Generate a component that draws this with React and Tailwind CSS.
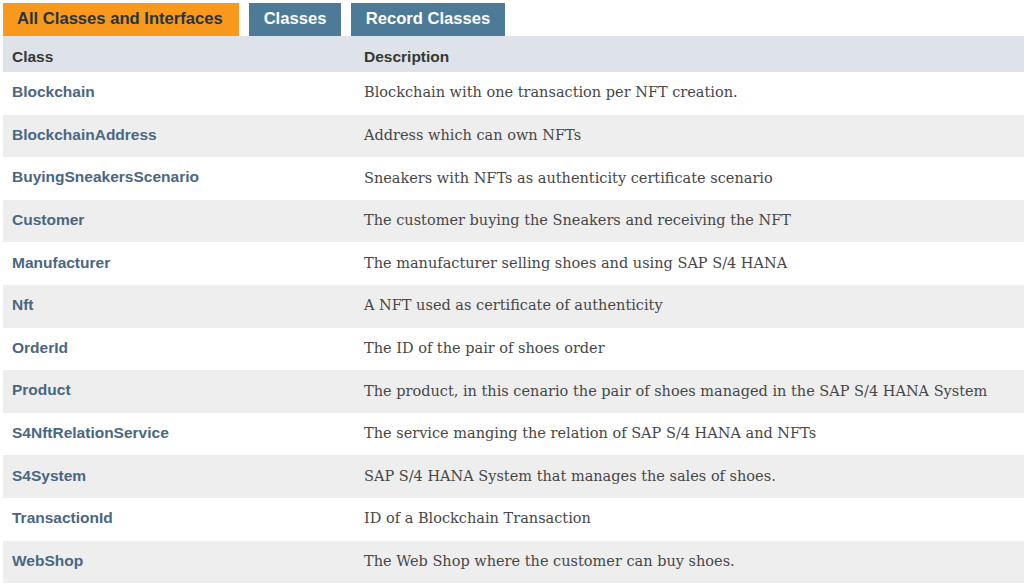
import React from 'react';

const rows = [
  ['Blockchain', 'Blockchain with one transaction per NFT creation.'],
  ['BlockchainAddress', 'Address which can own NFTs'],
  ['BuyingSneakersScenario', 'Sneakers with NFTs as authenticity certificate scenario'],
  ['Customer', 'The customer buying the Sneakers and receiving the NFT'],
  ['Manufacturer', 'The manufacturer selling shoes and using SAP S/4 HANA'],
  ['Nft', 'A NFT used as certificate of authenticity'],
  ['OrderId', 'The ID of the pair of shoes order'],
  ['Product', 'The product, in this cenario the pair of shoes managed in the SAP S/4 HANA System'],
  ['S4NftRelationService', 'The service manging the relation of SAP S/4 HANA and NFTs'],
  ['S4System', 'SAP S/4 HANA System that manages the sales of shoes.'],
  ['TransactionId', 'ID of a Blockchain Transaction'],
  ['WebShop', 'The Web Shop where the customer can buy shoes.'],
];

const sans = "font-['Liberation_Sans',Arial,sans-serif]";

const App = () => {
  return (
    <div className={`w-[1024px] h-[584px] overflow-hidden bg-white pt-[3px] pl-[3px] ${sans}`}>
      <div className="flex items-end gap-[10px] h-[33px]">
        <div className="h-[33px] bg-[#f8981d] pl-[14px] flex items-center text-[16.6px] font-bold text-[#253441] w-[236px]">
          All Classes and Interfaces
        </div>
        <div className="h-[33px] bg-[#4d7a97] flex items-center justify-center text-[16.6px] font-bold text-white w-[92px]">
          Classes
        </div>
        <div className="h-[33px] bg-[#4d7a97] flex items-center justify-center text-[16.6px] font-bold text-white w-[154px]">
          Record Classes
        </div>
      </div>
      <div className="grid grid-cols-[352px_1fr]">
        <div className="h-[36px] bg-[#dee3e9] flex items-center pt-[5px] pl-[9px] text-[15.5px] font-bold text-[#353833]">Class</div>
        <div className="h-[36px] bg-[#dee3e9] flex items-center pt-[5px] pl-[9px] text-[15.5px] font-bold text-[#353833]">Description</div>
        {rows.map(([name, desc], i) => (
          <React.Fragment key={name}>
            <div className={`h-[42.6px] flex items-center pb-[3px] pl-[9px] text-[15.5px] font-bold text-[#4a6782] ${i % 2 ? 'bg-[#eeeeef]' : 'bg-white'}`}>
              {name}
            </div>
            <div className={`h-[42.6px] flex items-center pl-[9px] text-[14.5px] text-[#474747] font-['DejaVu_Serif','Liberation_Serif',serif] ${i % 2 ? 'bg-[#eeeeef]' : 'bg-white'}`}>
              {desc}
            </div>
          </React.Fragment>
        ))}
      </div>
    </div>
  );
};

export default App;
